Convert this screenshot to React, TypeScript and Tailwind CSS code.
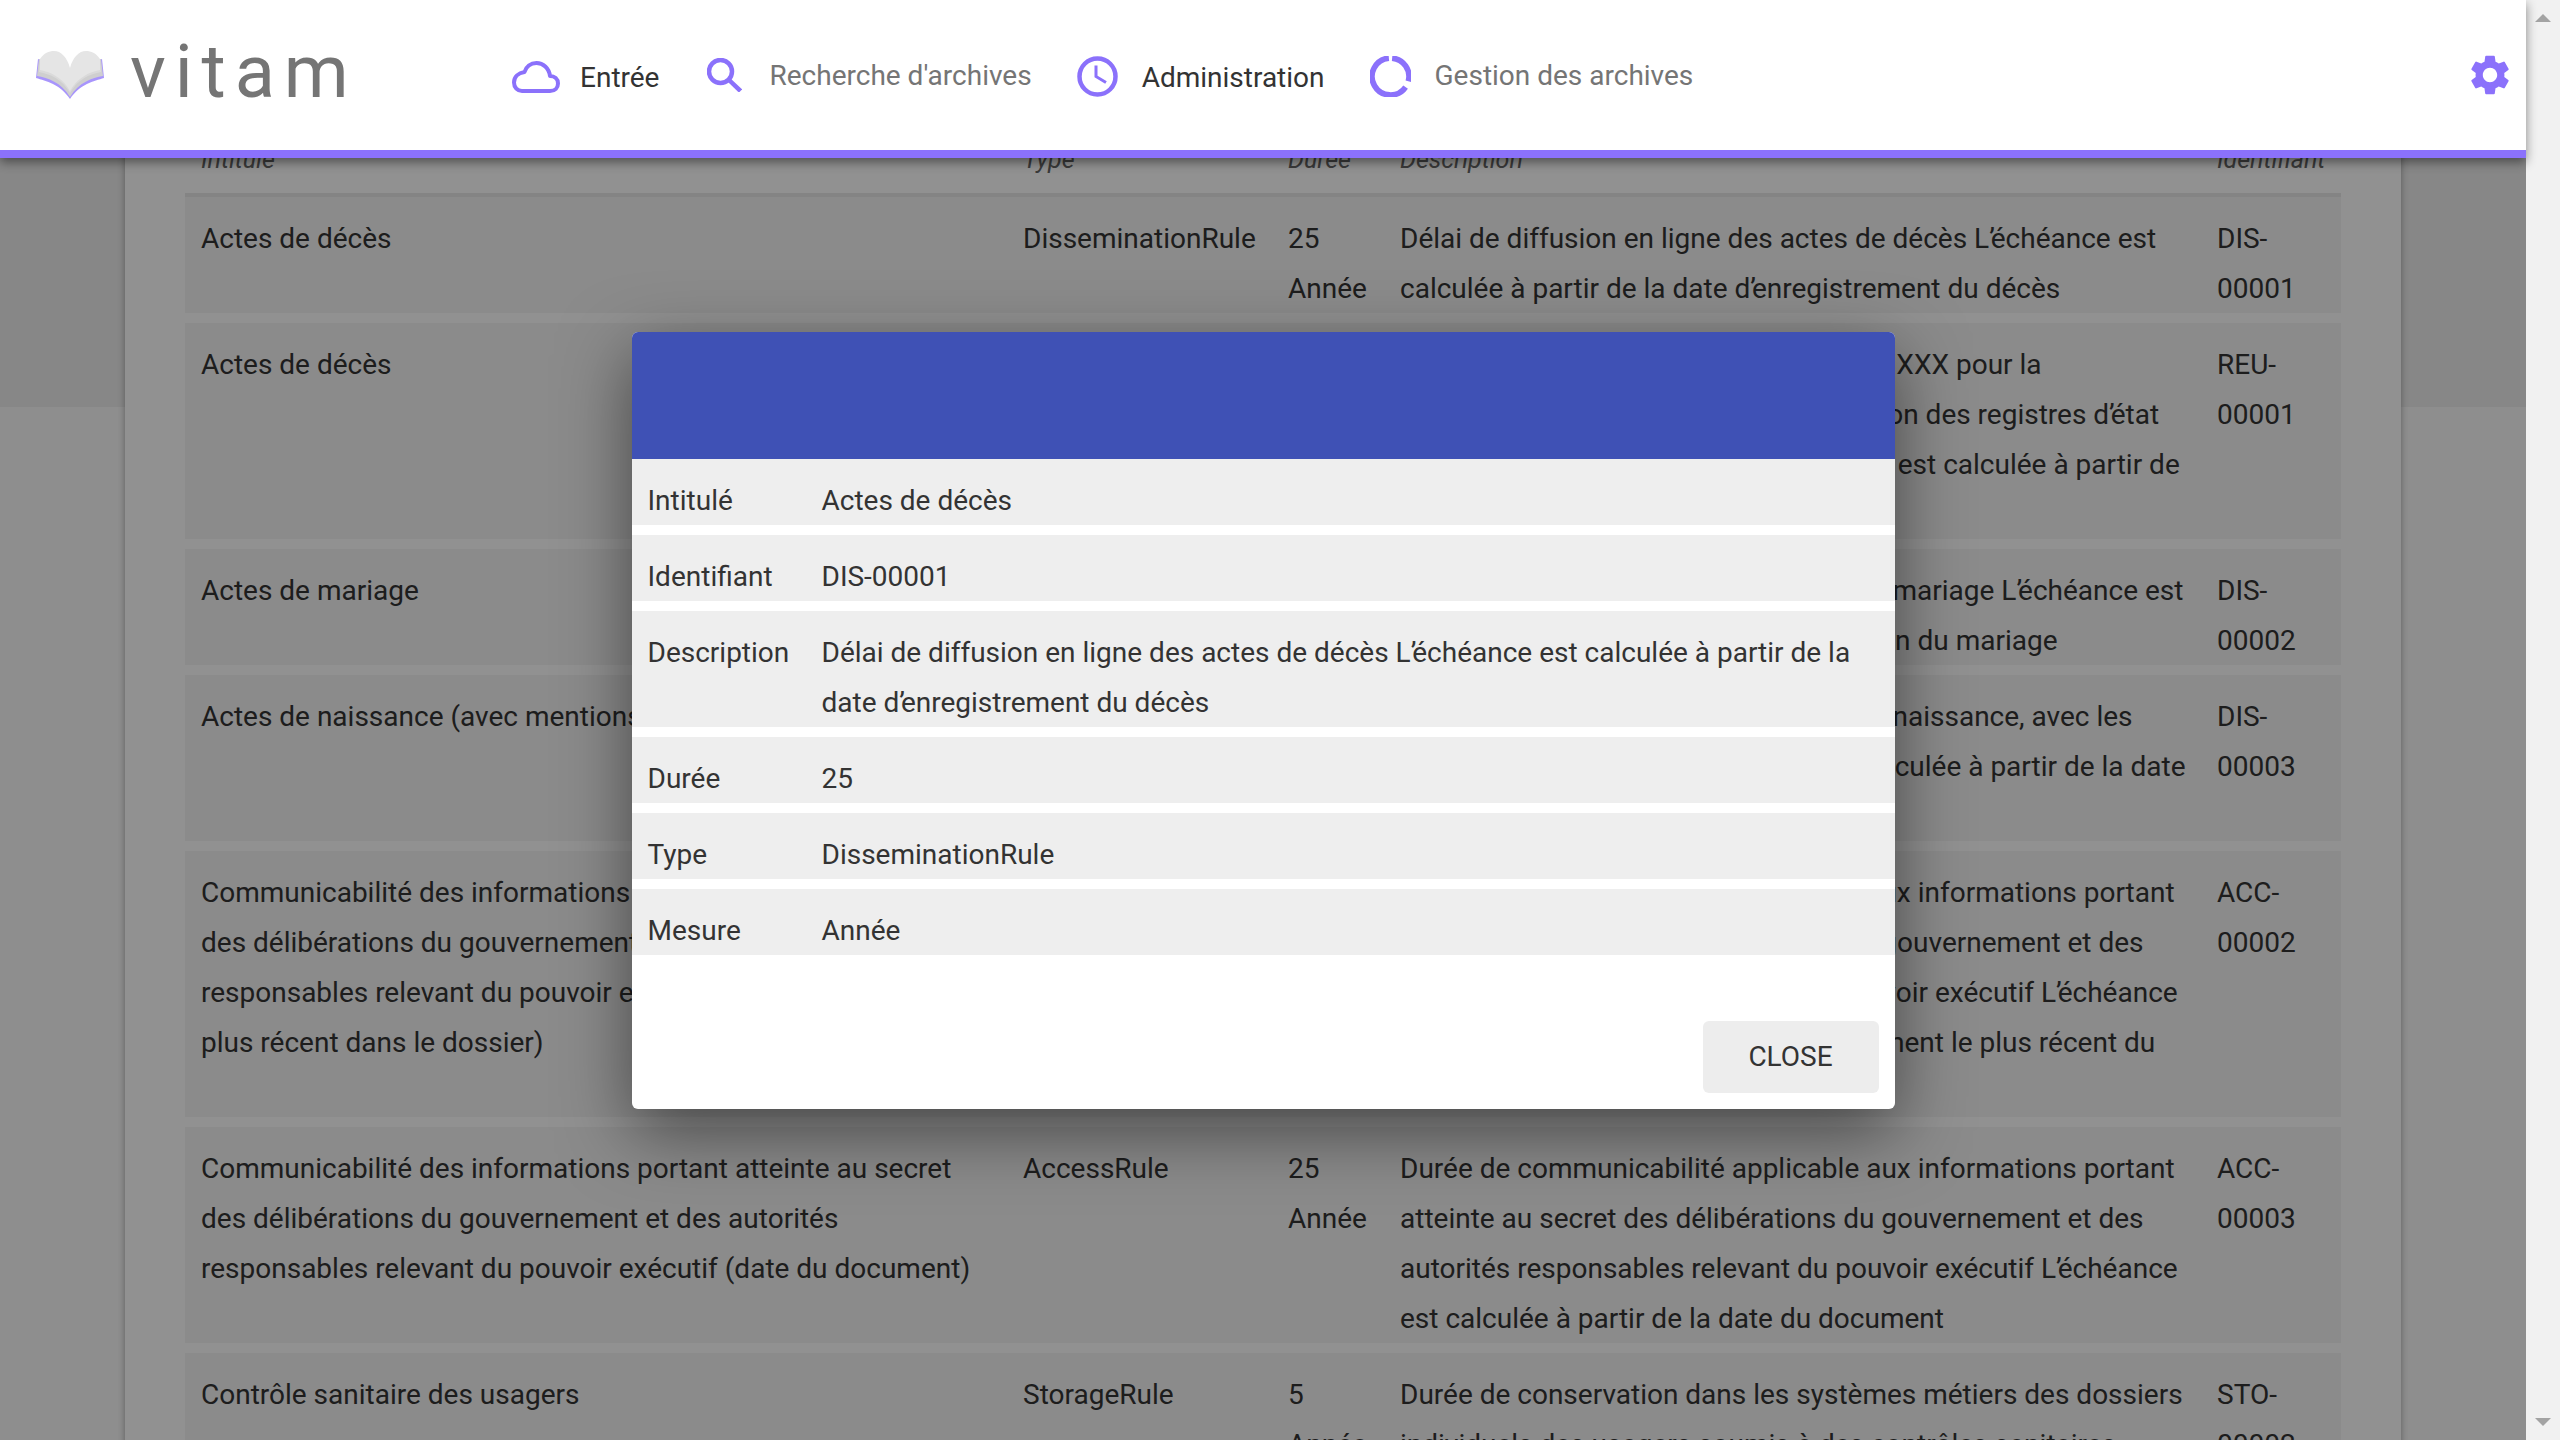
import React from 'react';
import { MdSettings } from 'react-icons/md';

interface Rule {
  title: string;
  type: string;
  duration: string;
  description: string;
  id: string;
}

const rules: Rule[] = [
  {
    title: 'Actes de décès',
    type: 'DisseminationRule',
    duration: '25 Année',
    description: 'Délai de diffusion en ligne des actes de décès L’échéance est\ncalculée à partir de la date d’enregistrement du décès',
    id: 'DIS-00001',
  },
  {
    title: 'Actes de décès',
    type: 'ReuseRule',
    duration: '100 Année',
    description: 'Durée de réutilisation de l’acte de décès XXX pour la\npour réutilisation à des fins de publication des registres d’état\ndes décès pour les usagers. L’échéance est calculée à partir de\nla date du décès',
    id: 'REU-00001',
  },
  {
    title: 'Actes de mariage',
    type: 'DisseminationRule',
    duration: '75 Année',
    description: 'Délai de diffusion en ligne des actes de mariage L’échéance est\ncalculée à partir de la date de célébration du mariage',
    id: 'DIS-00002',
  },
  {
    title: 'Actes de naissance (avec mentions marginales)',
    type: 'DisseminationRule',
    duration: '100 Année',
    description: 'Délai de diffusion en ligne des actes de naissance, avec les\nmentions marginales L’échéance est calculée à partir de la date\nde la naissance',
    id: 'DIS-00003',
  },
  {
    title: 'Communicabilité des informations portant atteinte au secret\ndes délibérations du gouvernement et des autorités\nresponsables relevant du pouvoir exécutif (document le\nplus récent dans le dossier)',
    type: 'AccessRule',
    duration: '25 Année',
    description: 'Durée de communicabilité applicable aux informations portant\natteinte au secret des délibérations du gouvernement et des\nautorités responsables relevant du pouvoir exécutif L’échéance\nest calculée à partir de la date du document le plus récent du\ndossier',
    id: 'ACC-00002',
  },
  {
    title: 'Communicabilité des informations portant atteinte au secret\ndes délibérations du gouvernement et des autorités\nresponsables relevant du pouvoir exécutif (date du document)',
    type: 'AccessRule',
    duration: '25 Année',
    description: 'Durée de communicabilité applicable aux informations portant\natteinte au secret des délibérations du gouvernement et des\nautorités responsables relevant du pouvoir exécutif L’échéance\nest calculée à partir de la date du document',
    id: 'ACC-00003',
  },
  {
    title: 'Contrôle sanitaire des usagers',
    type: 'StorageRule',
    duration: '5 Année',
    description: 'Durée de conservation dans les systèmes métiers des dossiers\nindividuels des usagers soumis à des contrôles sanitaires',
    id: 'STO-00002',
  },
];

const details = [
  { label: 'Intitulé', value: 'Actes de décès' },
  { label: 'Identifiant', value: 'DIS-00001' },
  { label: 'Description', value: 'Délai de diffusion en ligne des actes de décès L’échéance est calculée à partir de la date d’enregistrement du décès' },
  { label: 'Durée', value: '25' },
  { label: 'Type', value: 'DisseminationRule' },
  { label: 'Mesure', value: 'Année' },
];

// the apostrophe sits tighter in the original than Roboto sets it
const TightText = ({ text }: { text: string }) => (
  <>
    {text.split('’').map((part, i) => (
      <React.Fragment key={i}>
        {i > 0 && <span className="tracking-[-4px]">’</span>}
        {part}
      </React.Fragment>
    ))}
  </>
);

const BookLogo = () => (
  <svg width="68" height="48" viewBox="0 0 68 48" className="shrink-0">
    <path d="M0 27 C10 30 24 33 34 48 C44 33 58 30 68 27 L66 8 L34 20 L2 8 Z" fill="#8b71fb" fillOpacity="0.75" />
    <path d="M1 25 C12 27 25 31 34 46 C43 31 56 27 67 25 L65 8 L34 20 L3 8 Z" fill="#cfcfcf" />
    <path d="M3 21 C14 23 26 28 34 42 C42 28 54 23 65 21 L64 8 L34 20 L4 8 Z" fill="#dadada" />
    <path d="M4 8 C8 2 13 0 18 0 C25 0 31 6 34 17 C37 6 43 0 50 0 C55 0 60 2 64 8 L64 19 C53 21 41 27 34 40 C27 27 15 21 4 19 Z" fill="#e5e5e5" />
  </svg>
);

const CloudIcon = () => (
  <svg width="48" height="32" viewBox="0 0 48 32" fill="none" stroke="#8b71fb" strokeWidth="4" strokeLinejoin="round">
    <path d="M10 30 H38 C43 30 46 26.5 46 22.5 C46 18 42.5 15 38 15 C37 7 31 2 24.5 2 C18.5 2 14 6 12.5 11 C6.5 12 2 16 2 21.5 C2 26.5 5.5 30 10 30 Z" />
  </svg>
);

const SearchIcon = () => (
  <svg width="35" height="34" viewBox="0 0 35 34" fill="none" stroke="#8b71fb" strokeWidth="4.5" className="mb-[3px]">
    <circle cx="13.5" cy="13.5" r="11.5" />
    <path d="M21.5 21.5 L33.5 33" />
  </svg>
);

const ClockIcon = () => (
  <svg width="41" height="41" viewBox="0 0 41 41" fill="none" stroke="#8b71fb" strokeWidth="4.5">
    <circle cx="20.5" cy="20.5" r="18" />
    <path d="M19 9.5 V20.5 L29 26.5" strokeWidth="3" />
  </svg>
);

const RingIcon = () => (
  <svg width="41" height="41" viewBox="0 0 40 40" fill="none" stroke="#8b71fb" strokeWidth="5.5">
    <path d="M21.6 2.07 A18 18 0 0 1 37.39 24.66" />
    <path d="M34.74 30.32 A18 18 0 1 1 18.43 2.07" />
  </svg>
);

const navItems = [
  { label: 'Entrée', icon: <CloudIcon />, text: 'mt-[3px] text-[#333333]', box: 'w-[68px]', gap: 'mr-[48px]' },
  { label: "Recherche d'archives", icon: <SearchIcon />, text: '-mt-[1px] text-[#757575]', box: 'w-[62px]', gap: 'mr-[45px]' },
  { label: 'Administration', icon: <ClockIcon />, text: 'mt-[3px] text-[#333333]', box: 'w-[65px]', gap: 'mr-[45px]' },
  { label: 'Gestion des archives', icon: <RingIcon />, text: '-mt-[1px] text-[#757575]', box: 'w-[65px]', gap: '' },
];

const Header = () => (
  <header className="relative z-20 flex h-[158px] shrink-0 items-center border-b-8 border-[#8b71fb] bg-white shadow-[0_4px_10px_rgba(0,0,0,0.45)]">
    <div className="flex w-[512px] shrink-0 items-center pl-[36px]">
      <BookLogo />
      <span className="ml-[26px] -mt-[6px] text-[74px] leading-none tracking-[0.12em] text-[#757575]">vitam</span>
    </div>
    <nav className="mt-[3px] flex items-center text-[28px]">
      {navItems.map((item) => (
        <div key={item.label} className={`flex items-center ${item.gap}`}>
          <div className={`flex items-center ${item.box}`}>{item.icon}</div>
          <span className={item.text}>{item.label}</span>
        </div>
      ))}
    </nav>
    <MdSettings className="ml-auto mr-3 text-[48px] text-[#8b71fb]" />
  </header>
);

const RuleRow = ({ rule }: { rule: Rule }) => (
  <div className="mb-[10px] grid grid-cols-[822px_265px_112px_817px_140px] bg-[#f4f4f4] pt-[17px]">
    <div className="-mb-px whitespace-pre px-4">{rule.title}</div>
    <div className="-mb-px px-4">{rule.type}</div>
    <div className="-mb-px px-4">{rule.duration}</div>
    <div className="-mb-px whitespace-pre px-4"><TightText text={rule.description} /></div>
    <div className="-mb-px px-4">{rule.id}</div>
  </div>
);

const RulesTable = () => (
  <div className="-mt-[20px] ml-[125px] w-[2276px] bg-white px-[60px] text-[28px] leading-[50px] text-[#333333] shadow-[0_0_7px_rgba(0,0,0,0.35)]">
    <div className="grid h-[59px] grid-cols-[822px_265px_112px_817px_140px] border-b-4 border-[#e9e9e9] text-[25px] leading-[44px] italic text-[#666666]">
      <div className="px-4">Intitulé</div>
      <div className="px-4">Type</div>
      <div className="px-4">Durée</div>
      <div className="px-4">Description</div>
      <div className="px-4">Identifiant</div>
    </div>
    {rules.map((rule) => (
      <RuleRow key={rule.id + rule.type} rule={rule} />
    ))}
  </div>
);

const RuleDialog = () => (
  <div className="absolute inset-0 z-10 flex items-center justify-center bg-black/43">
    <div className="flex w-[1263px] flex-col overflow-hidden rounded-md bg-white text-[28px] leading-[50px] text-[#333333] shadow-[0_22px_70px_rgba(0,0,0,0.5)]">
      <div className="h-[127px] bg-[#3f51b5]" />
      <div className="flex flex-col gap-[10px]">
        {details.map((d) => (
          <div key={d.label} className="grid grid-cols-[190px_1fr] bg-[#eeeeee] pt-[17px]">
            <div className="-mb-px pl-4">{d.label}</div>
            <div className="-mb-px pr-4"><TightText text={d.value} /></div>
          </div>
        ))}
      </div>
      <div className="flex h-[154px] items-end justify-end p-4">
        <button className="h-[72px] w-[176px] rounded-md bg-[#ededed] text-[28px] text-[#333333]">CLOSE</button>
      </div>
    </div>
  </div>
);

const Scrollbar = () => (
  <div className="flex w-[34px] shrink-0 flex-col items-center justify-between bg-[#f1f1f1] py-[14px]">
    <svg width="16" height="8" viewBox="0 0 16 8"><path d="M8 0 L16 8 H0 Z" fill="#a3a3a3" /></svg>
    <svg width="16" height="8" viewBox="0 0 16 8"><path d="M0 0 H16 L8 8 Z" fill="#a3a3a3" /></svg>
  </div>
);

export default function App() {
  return (
    <div className="flex h-screen w-full overflow-hidden font-['Roboto',sans-serif]">
      <div className="relative flex min-w-0 flex-1 flex-col">
        <Header />
        <main className="min-h-0 flex-1 overflow-hidden bg-[linear-gradient(#ededed_249px,#fafafa_249px)]">
          <RulesTable />
        </main>
        <RuleDialog />
      </div>
      <Scrollbar />
    </div>
  );
}
